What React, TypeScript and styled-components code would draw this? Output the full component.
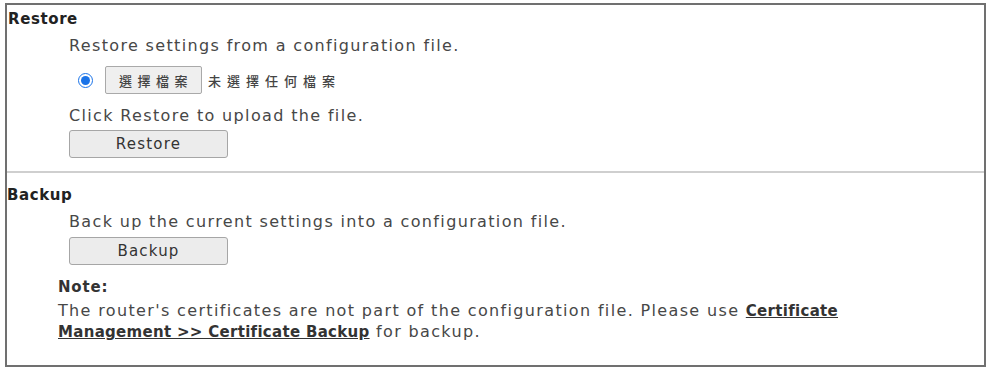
import React from "react";
import styled, { createGlobalStyle } from "styled-components";

const Global = createGlobalStyle`
  html, body { margin: 0; padding: 0; background: #ffffff; }
  body { font-family: "DejaVu Sans", Verdana, sans-serif; }
`;

const Frame = styled.div`
  box-sizing: border-box;
  margin: 3px 0 0 5px;
  width: 981px;
  height: 364px;
  border: 2px solid #707070;
  display: flex;
  flex-direction: column;
  color: #474747;
  font-size: 16px;
  letter-spacing: 1.35px;
`;

const Section = styled.section<{ $top: number; $bottom: number }>`
  display: flex;
  flex-direction: column;
  padding: ${(p) => p.$top}px 0 ${(p) => p.$bottom}px;
`;

const Divider = styled.div`
  height: 2px;
  background: #cfcfcf;
`;

const Heading = styled.div<{ $left: number; $h: number }>`
  height: ${(p) => p.$h}px;
  line-height: ${(p) => p.$h}px;
  padding-left: ${(p) => p.$left}px;
  font-weight: bold;
  font-size: 15px;
  color: #222;
  letter-spacing: 0.6px;
`;

const Line = styled.div<{ $h: number }>`
  height: ${(p) => p.$h}px;
  line-height: ${(p) => p.$h}px;
  padding-left: 62px;
  white-space: nowrap;
`;

const FileRow = styled.div`
  height: 40px;
  display: flex;
  align-items: center;
  padding-left: 71px;
`;

const Radio = styled.input`
  margin: 0;
  width: 15px;
  height: 15px;
  accent-color: #1a73e8;
`;

const FileButton = styled.span`
  box-sizing: border-box;
  margin-left: 12px;
  height: 28px;
  width: 97px;
  display: inline-flex;
  align-items: center;
  justify-content: center;
  border: 1px solid #a9a9a9;
  border-radius: 2px;
  background: #efefef;
  font-family: "Noto Sans CJK TC", sans-serif;
  font-size: 13px;
  font-weight: 500;
  letter-spacing: 5.5px;
  padding-left: 5px;
  color: #444;
`;

const FileName = styled.span`
  margin-left: 6px;
  font-family: "Noto Sans CJK TC", sans-serif;
  font-size: 13px;
  font-weight: 500;
  letter-spacing: 6px;
  color: #444;
`;

const ActionButton = styled.button<{ $mt: number }>`
  box-sizing: border-box;
  margin: ${(p) => p.$mt}px 0 0 62px;
  width: 159px;
  height: 28px;
  border: 1px solid #a6a6a6;
  border-radius: 3px;
  background: #ececec;
  font-family: "DejaVu Sans", Verdana, sans-serif;
  font-size: 15px;
  letter-spacing: 1.2px;
  color: #333;
  padding: 0;
`;

const NoteTitle = styled.div`
  height: 22px;
  line-height: 22px;
  margin-top: 11px;
  padding-left: 51px;
  font-weight: bold;
  font-size: 15px;
  color: #333;
  letter-spacing: 0.8px;
`;

const NoteText = styled.div`
  margin-top: 2px;
  padding-left: 51px;
  display: flex;
  flex-direction: column;
`;

const NoteLine = styled.div`
  height: 21px;
  line-height: 21px;
  white-space: nowrap;
`;

const Link = styled.a`
  color: #333;
  font-weight: bold;
  font-size: 15px;
  text-decoration: underline;
  letter-spacing: 0.3px;
`;

export default function App() {
  return (
    <>
      <Global />
      <Frame>
        <Section $top={1} $bottom={13}>
          <Heading $left={1} $h={26}>Restore</Heading>
          <Line $h={28}>Restore settings from a configuration file.</Line>
          <FileRow>
            <Radio type="radio" name="mode" defaultChecked />
            <FileButton>選擇檔案</FileButton>
            <FileName>未選擇任何檔案</FileName>
          </FileRow>
          <Line $h={31}>Click Restore to upload the file.</Line>
          <ActionButton $mt={-1}>Restore</ActionButton>
        </Section>
        <Divider />
        <Section $top={10} $bottom={0}>
          <Heading $left={0} $h={24}>Backup</Heading>
          <Line $h={30}>Back up the current settings into a configuration file.</Line>
          <ActionButton $mt={0}>Backup</ActionButton>
          <NoteTitle>Note:</NoteTitle>
          <NoteText>
            <NoteLine>
              The router's certificates are not part of the configuration file. Please use{" "}
              <Link href="#">Certificate</Link>
            </NoteLine>
            <NoteLine>
              <Link href="#">Management &gt;&gt; Certificate Backup</Link> for backup.
            </NoteLine>
          </NoteText>
        </Section>
      </Frame>
    </>
  );
}
